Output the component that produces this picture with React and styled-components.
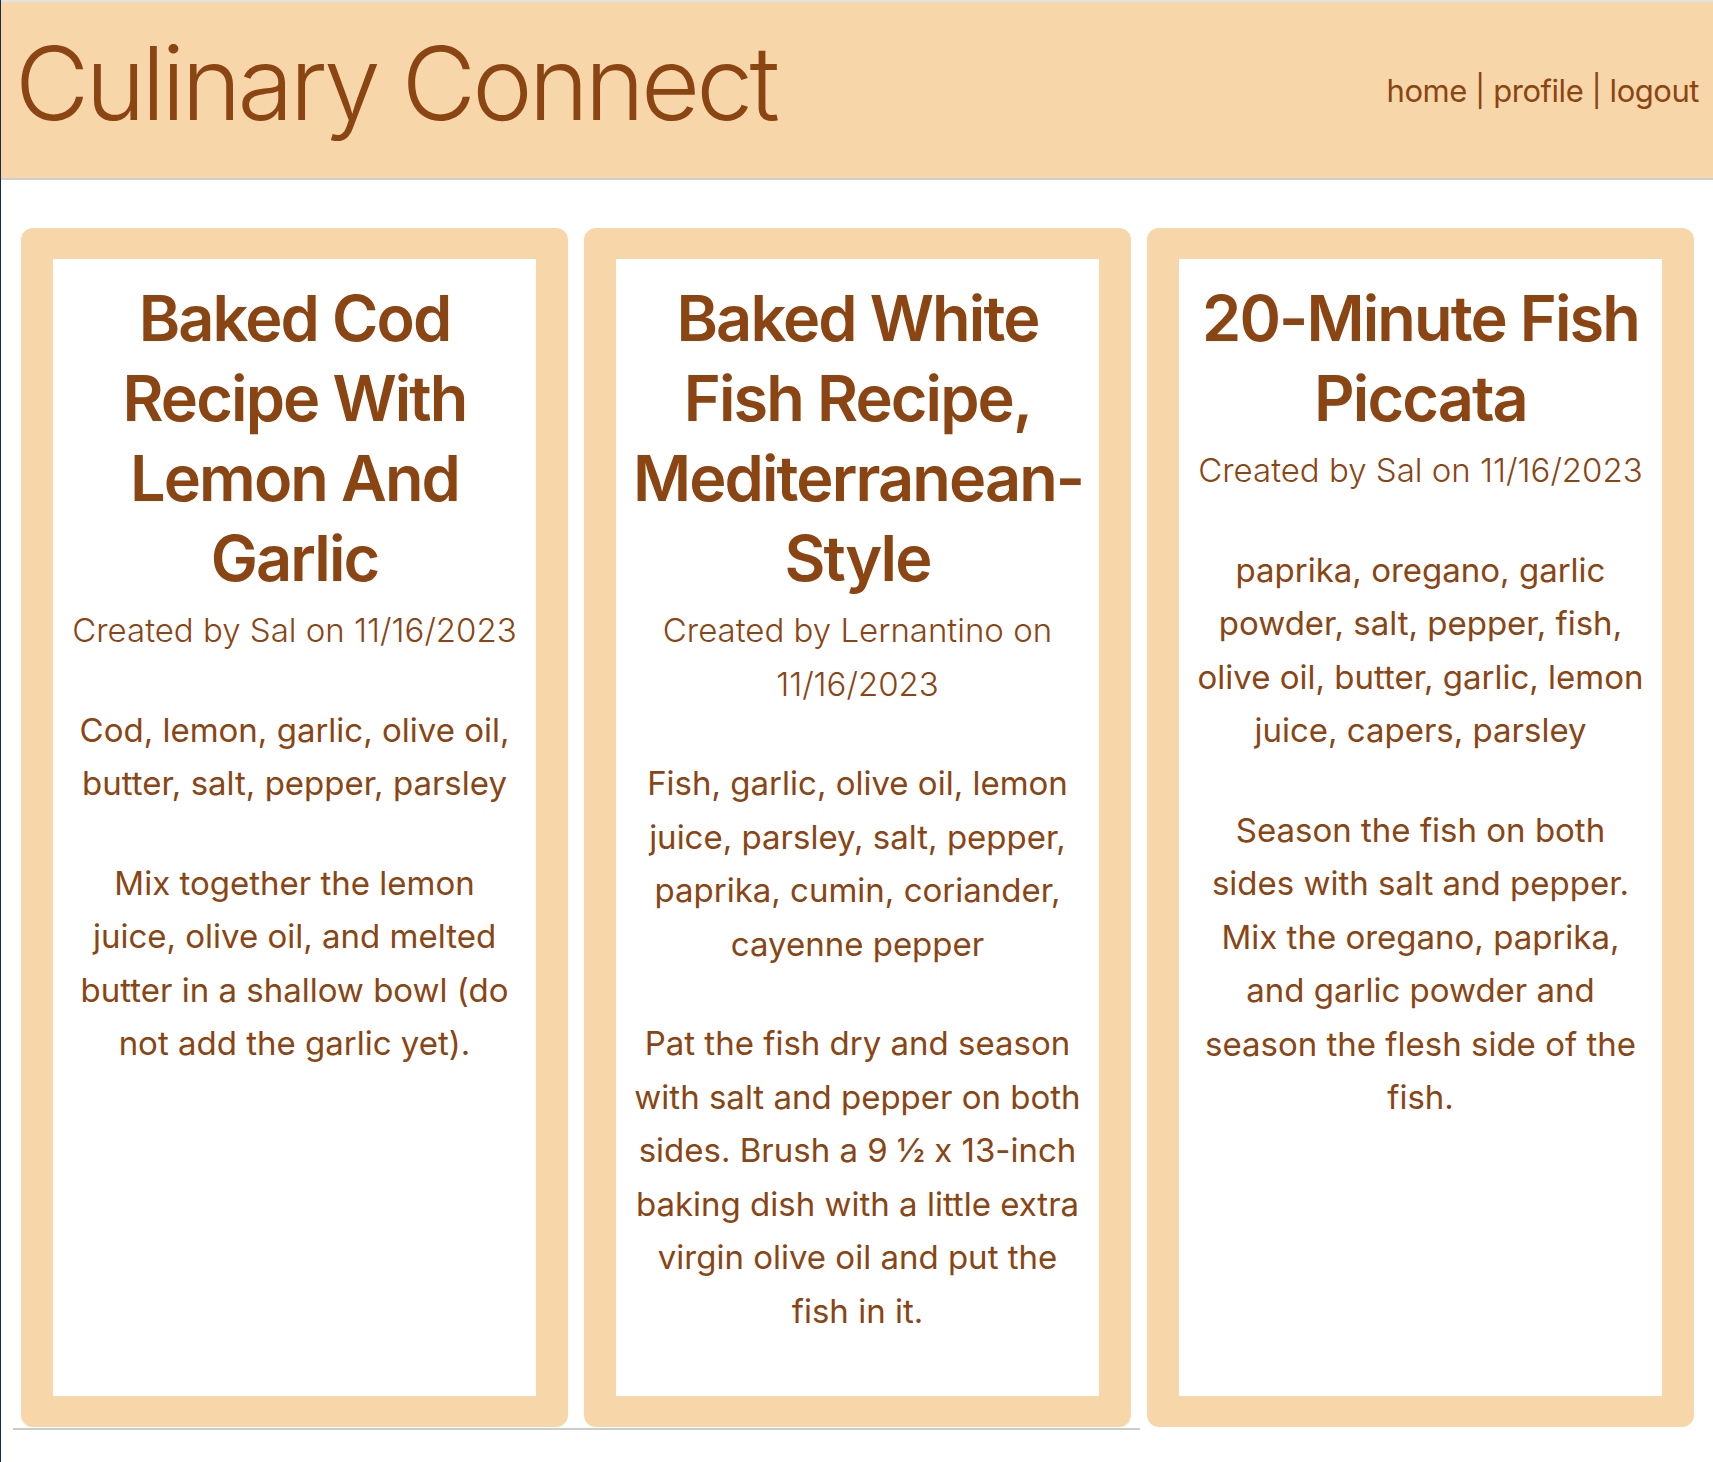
import React from "react";
import styled, { createGlobalStyle } from "styled-components";

const GlobalStyle = createGlobalStyle`
  html, body { margin: 0; padding: 0; background: #ffffff; }
  body { font-family: Inter, "Noto Sans", sans-serif; color: #8b4513; }
  * { box-sizing: border-box; }
`;

const Page = styled.div`
  min-height: 100vh;
  border-left: 1px solid #1d2a46;
`;

const Header = styled.header`
  display: flex;
  justify-content: space-between;
  align-items: flex-start;
  height: 180px;
  padding: 0 14px 0 14px;
  background: #f7d6aa;
  border-top: 2px solid #e2e2e2;
  border-bottom: 2px solid #cfcfcf;
`;

const Brand = styled.h1`
  margin: 20px 0 0 0;
  font-size: 102px;
  line-height: 1.2;
  font-weight: 300;
  letter-spacing: -0.038em;
  color: #8b4513;
`;

const Nav = styled.nav`
  margin-top: 70px;
  font-size: 31px;
  line-height: 1.2;
  letter-spacing: -0.015em;
  color: #8b4513;
  white-space: pre;
`;

const NavLink = styled.a`
  color: inherit;
  text-decoration: none;
`;

const Main = styled.main`
  padding: 48px 19px 0 20px;
`;

const Grid = styled.div`
  display: grid;
  grid-template-columns: repeat(3, minmax(0, 1fr));
  gap: 16px;
  align-items: stretch;
`;

const Card = styled.article`
  display: flex;
  flex-direction: column;
  background: #f7d6aa;
  border-radius: 12px;
  padding: 31px 32px;
`;

const Inner = styled.div`
  flex: 1;
  background: #ffffff;
  padding: 19px 17px 58px;
  text-align: center;
  color: #8b4513;
`;

const Title = styled.h2`
  margin: 0;
  font-size: 63px;
  line-height: 80px;
  font-weight: 600;
  letter-spacing: -0.03em;
`;

const Meta = styled.p`
  margin: 6px 0 0;
  font-size: 33px;
  line-height: 53.5px;
  font-weight: 300;
`;

const Text = styled.p`
  margin: 46px 0 0;
  font-size: 33px;
  line-height: 53.5px;
  font-weight: 400;
`;

const Rule = styled.div`
  width: 1127px;
  height: 2px;
  margin-left: -8px;
  margin-top: 1px;
  background: #cccccc;
`;

const recipes = [
  {
    title: "Baked Cod Recipe With Lemon And Garlic",
    author: "Sal",
    date: "11/16/2023",
    ingredients: "Cod, lemon, garlic, olive oil, butter, salt, pepper, parsley",
    directions:
      "Mix together the lemon juice, olive oil, and melted butter in a shallow bowl (do not add the garlic yet).",
  },
  {
    title: "Baked White Fish Recipe, Mediterranean-Style",
    author: "Lernantino",
    date: "11/16/2023",
    ingredients:
      "Fish, garlic, olive oil, lemon juice, parsley, salt, pepper, paprika, cumin, coriander, cayenne pepper",
    directions:
      "Pat the fish dry and season with salt and pepper on both sides. Brush a 9 ½ x 13-inch baking dish with a little extra virgin olive oil and put the fish in it.",
  },
  {
    title: "20-Minute Fish Piccata",
    author: "Sal",
    date: "11/16/2023",
    ingredients:
      "paprika, oregano, garlic powder, salt, pepper, fish, olive oil, butter, garlic, lemon juice, capers, parsley",
    directions:
      "Season the fish on both sides with salt and pepper. Mix the oregano, paprika, and garlic powder and season the flesh side of the fish.",
  },
];

export default function App() {
  return (
    <Page>
      <GlobalStyle />
      <Header>
        <Brand>Culinary Connect</Brand>
        <Nav>
          <NavLink href="#">home</NavLink>
          {" | "}
          <NavLink href="#">profile</NavLink>
          {" | "}
          <NavLink href="#">logout</NavLink>
        </Nav>
      </Header>
      <Main>
        <Grid>
          {recipes.map((r) => (
            <Card key={r.title}>
              <Inner>
                <Title>{r.title}</Title>
                <Meta>
                  Created by {r.author} on {r.date}
                </Meta>
                <Text>{r.ingredients}</Text>
                <Text>{r.directions}</Text>
              </Inner>
            </Card>
          ))}
        </Grid>
        <Rule />
      </Main>
    </Page>
  );
}
